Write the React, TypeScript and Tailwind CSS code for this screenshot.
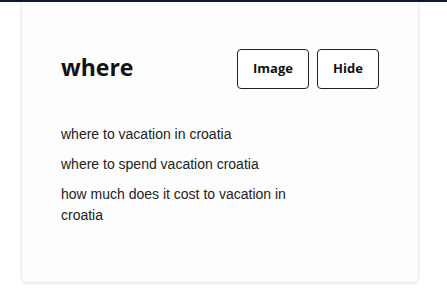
import React from "react";

const suggestions = [
  "where to vacation in croatia",
  "where to spend vacation croatia",
  "how much does it cost to vacation in croatia",
];

export default function App() {
  return (
    <div className="h-[296px] w-[447px] overflow-hidden border-t-2 border-[#0f1a2a] bg-white">
      <div className="-mt-1 ml-[21px] mr-[28px] h-[285px] rounded-md border border-[#ececec] bg-[#fdfdfd] px-[39px] pt-[50px] shadow-[0_1px_3px_rgba(0,0,0,0.08)]">
        <div className="flex items-center justify-between">
          <h1 className="mb-1 font-['Open_Sans',sans-serif] text-[23px] font-bold leading-none text-[#111]">
            where
          </h1>
          <div className="flex gap-2">
            <button className="h-10 w-[72px] rounded border border-[#222] bg-white font-['Open_Sans',sans-serif] text-[13px] font-bold text-[#111]">
              Image
            </button>
            <button className="h-10 w-[62px] rounded border border-[#222] bg-white font-['Open_Sans',sans-serif] text-[13px] font-bold text-[#111]">
              Hide
            </button>
          </div>
        </div>
        <ul className="mt-[35px] flex max-w-[240px] flex-col gap-[9px] font-['Liberation_Sans',Arial,sans-serif] text-[14px] leading-[21px] text-[#222]">
          {suggestions.map((s) => (
            <li key={s}>{s}</li>
          ))}
        </ul>
      </div>
    </div>
  );
}
